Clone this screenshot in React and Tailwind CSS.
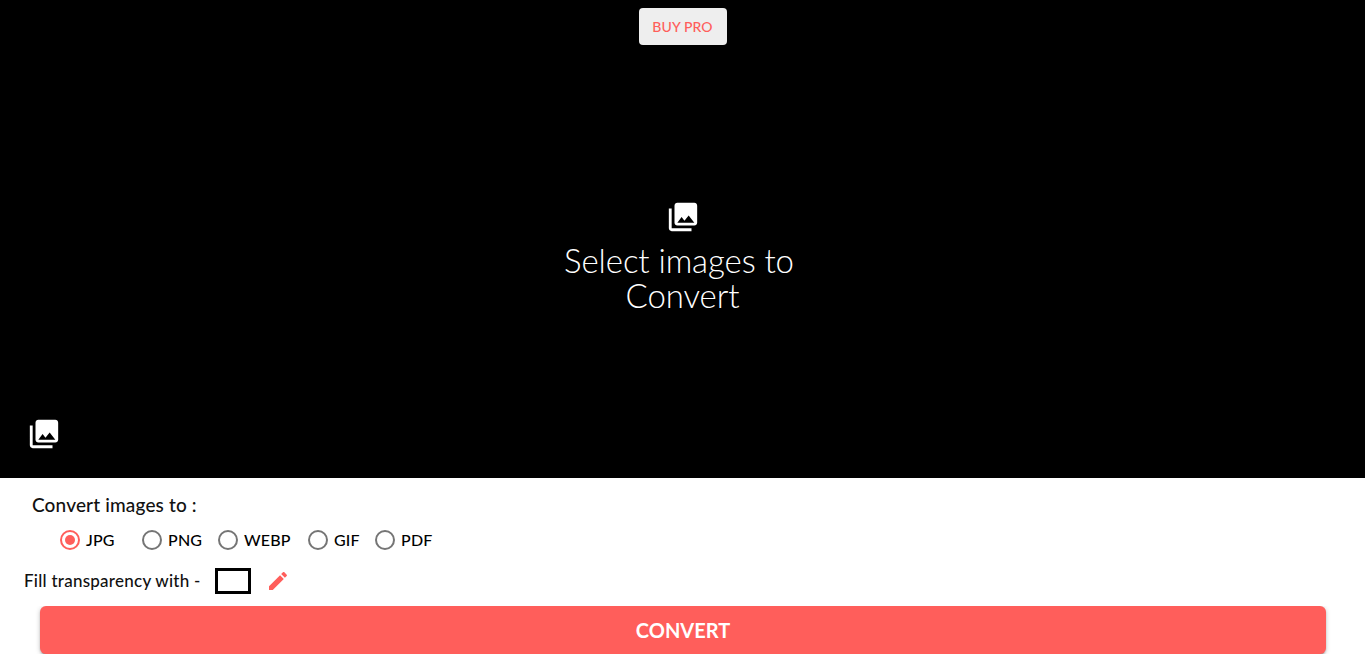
const PHOTO = "M22 16V4c0-1.1-.9-2-2-2H8c-1.1 0-2 .9-2 2v12c0 1.1.9 2 2 2h12c1.1 0 2-.9 2-2zm-11-4l2.03 2.71L16 11l4 5H8l3-4zM2 6v14c0 1.1.9 2 2 2h14v-2H4V6H2z";
const PENCIL = "M3 17.25V21h3.75L17.81 9.94l-3.75-3.75L3 17.25zM20.71 7.04c.39-.39.39-1.02 0-1.41l-2.34-2.34c-.39-.39-1.02-.39-1.41 0l-1.83 1.83 3.75 3.75 1.83-1.83z";

function PhotoIcon() {
  return (
    <svg viewBox="0 0 24 24" className="w-[34px] h-[34px] block" fill="#fff">
      <path d={PHOTO} />
    </svg>
  );
}

function Radio({ label, checked, className }) {
  return (
    <div className={`flex items-center ${className}`}>
      <span className={`w-5 h-5 rounded-full border-2 flex items-center justify-center ${checked ? "border-[#ff5e5b]" : "border-[#757575]"}`}>
        {checked && <span className="w-[10px] h-[10px] rounded-full bg-[#ff5e5b]" />}
      </span>
      <span className="ml-[6px] text-[16px] leading-5 font-medium text-black tracking-[0.2px]">{label}</span>
    </div>
  );
}

export default function App() {
  return (
    <div className="h-[664px] overflow-hidden bg-white font-['Lato','Open_Sans',sans-serif]">
      <div className="h-[478px] bg-black flex flex-col items-center pt-2">
        <button className="w-[88px] h-[37px] rounded bg-[#eeeeee] text-[#ff5e5b] text-[14px] font-medium flex items-center justify-center shrink-0 tracking-[0.1px]">
          BUY PRO
        </button>
        <div className="mt-[155px] flex flex-col items-center text-white">
          <div className="ml-[2px]"><PhotoIcon /></div>
          <div className="mt-[9px] text-[33px] leading-[35px] font-light text-center tracking-[-0.1px]">
            <span className="pr-[7px]">Select images to</span>
            <br />
            Convert
          </div>
        </div>
        <div className="mt-auto self-start ml-[27px] mb-[27px]">
          <PhotoIcon />
        </div>
      </div>
      <div className="pt-[15px] pl-[32px] text-[19px] leading-6 font-medium text-[#111] tracking-[0.15px]">Convert images to :</div>
      <div className="flex mt-[13px] pl-[60px] h-5">
        <Radio label="JPG" checked className="w-[82px]" />
        <Radio label="PNG" className="w-[76px]" />
        <Radio label="WEBP" className="w-[90px]" />
        <Radio label="GIF" className="w-[67px]" />
        <Radio label="PDF" />
      </div>
      <div className="flex items-center mt-[18px] pl-[24px] h-[26px]">
        <span className="text-[17px] font-medium text-[#111] w-[191px] tracking-[0.25px]">Fill transparency with -</span>
        <span className="w-9 h-[26px] border-[3px] border-black bg-white" />
        <svg viewBox="0 0 24 24" className="w-6 h-6 ml-[15px]" fill="#ff5e5b"><path d={PENCIL} /></svg>
      </div>
      <div className="mt-3 h-[48px] overflow-hidden px-[40px]">
        <button className="block w-[1286px] h-[48px] rounded-[6px] bg-[#ff5e5b] text-white text-[20px] font-bold shadow-[0_2px_2px_0_rgba(0,0,0,0.14),0_3px_1px_-2px_rgba(0,0,0,0.2),0_1px_5px_0_rgba(0,0,0,0.22)]">
          CONVERT
        </button>
      </div>
    </div>
  );
}
